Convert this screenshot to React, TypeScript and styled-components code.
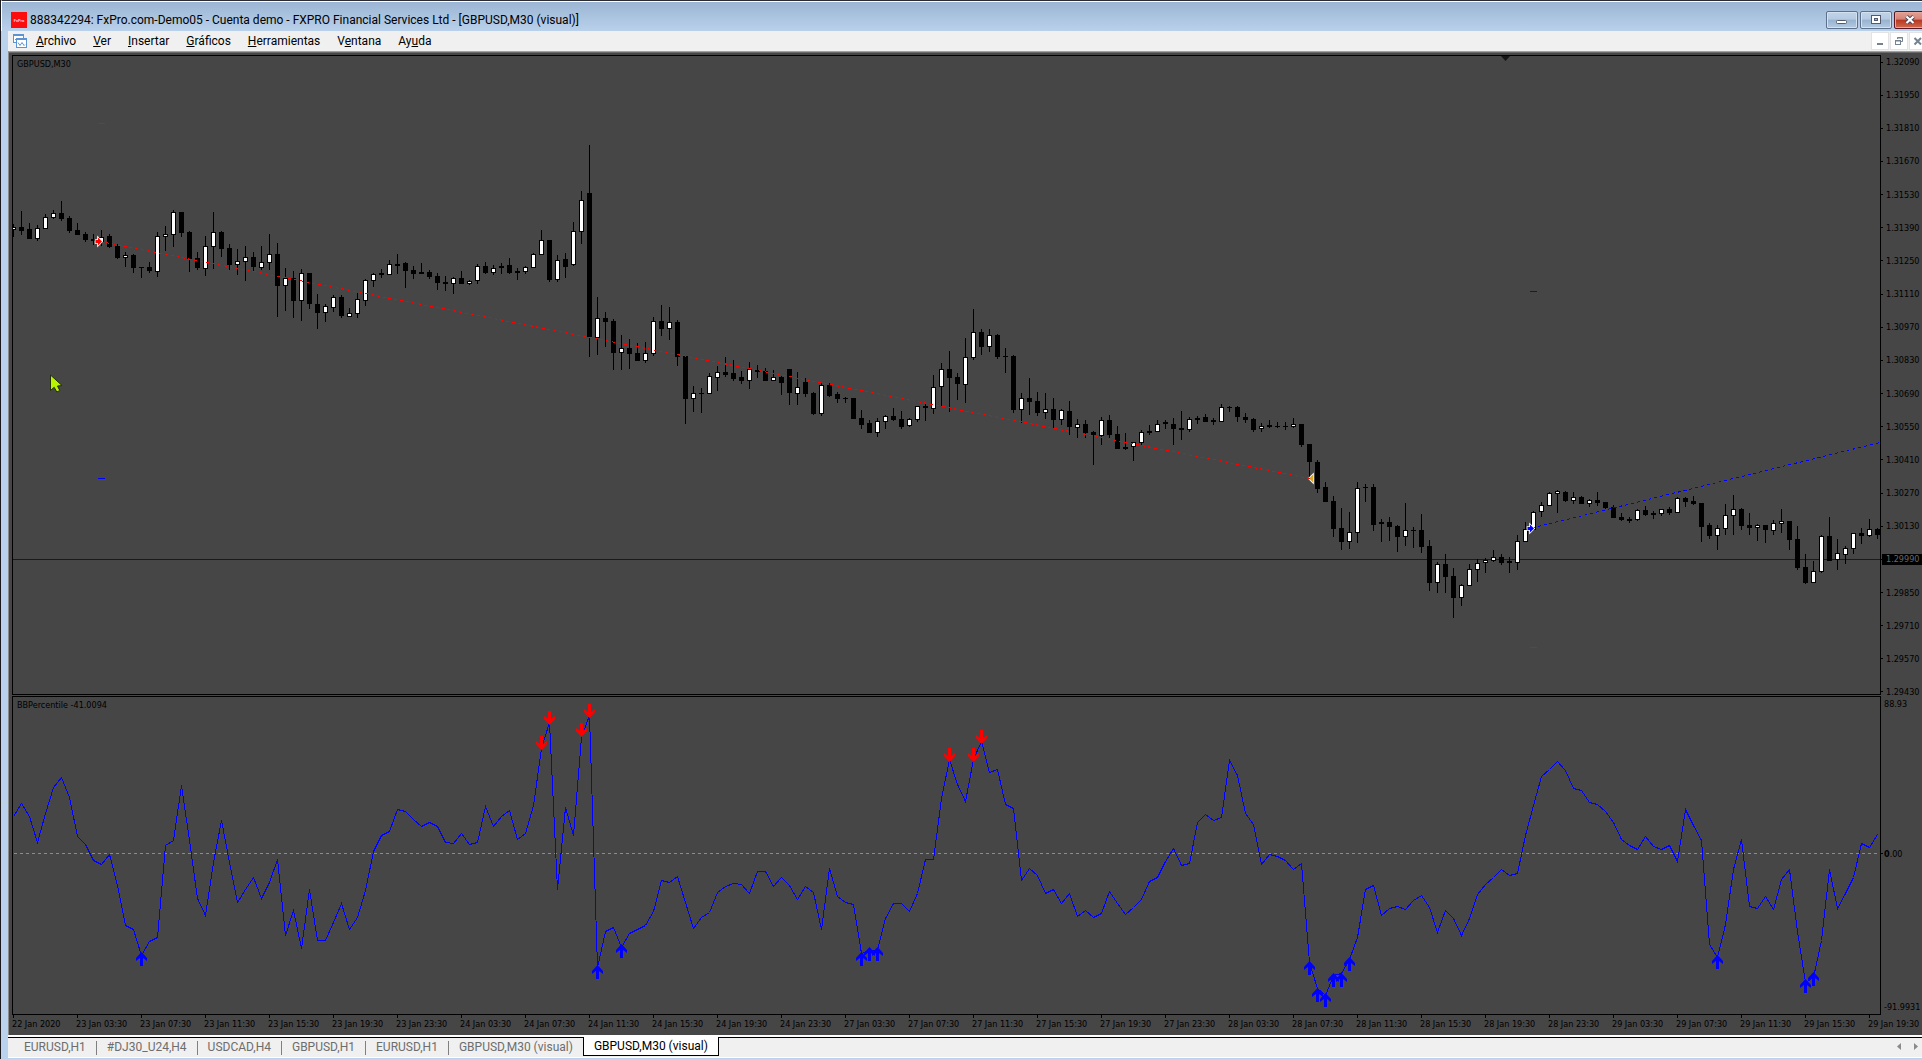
import React from "react";
import styled, { createGlobalStyle } from "styled-components";

const uiFont = `Roboto, "Open Sans", "Noto Sans", sans-serif`;
const chartFont = `"DejaVu Sans Condensed", "DejaVu Sans", "Liberation Sans", sans-serif`;

const color = {
  frame: "#bad2ec",
  bar: "#f0f0f0",
  chart: "#464646",
  ink: "#000000",
  bull: "#ffffff",
  sell: "#ff0000",
  buy: "#0000ff",
};

const GlobalStyle = createGlobalStyle`
  * { box-sizing: border-box; }
  html, body { margin: 0; padding: 0; overflow: hidden; background: ${color.frame}; }
  button { font: inherit; color: inherit; margin: 0; }
`;

const Window = styled.div`
  display: flex;
  flex-direction: column;
  height: 100vh;
  overflow: hidden;
  background: ${color.frame};
  border-left: 1px solid #1b1b1f;
  font-family: ${uiFont};
  font-size: 12px;
  color: ${color.ink};
`;

const TitleBar = styled.header`
  display: flex;
  align-items: center;
  flex: none;
  height: 31px;
  padding: 7px 0 0 9px;
  border-top: 1px solid #2b2b33;
  border-left: 1px solid #ffffff;
  box-shadow: inset 0 1px 0 #ffffff;
  background: linear-gradient(#9ab4d3, #b9d1ea);
  overflow: hidden;
`;

const Title = styled.h1`
  flex: 1;
  margin: 0 0 0 3px;
  font-size: 12px;
  line-height: 16px;
  font-weight: 400;
  white-space: nowrap;
`;

const CaptionButtons = styled.div`
  display: flex;
  gap: 2px;
  margin-right: -4px;
`;

const CaptionButton = styled.button<{ $danger?: boolean }>`
  display: flex;
  align-items: center;
  justify-content: center;
  width: 32px;
  height: 18px;
  padding: 0;
  border: 1px solid ${(p) => (p.$danger ? "#5a1622" : "#5d708c")};
  border-radius: 2px;
  box-shadow: inset 0 0 0 1px ${(p) => (p.$danger ? "#e7a79c" : "#d3e1f0")};
  background: ${(p) =>
    p.$danger
      ? "linear-gradient(#e3a095 0%, #d68375 45%, #b8371f 50%, #cf6a50 100%)"
      : "linear-gradient(#c0d3e8 0%, #b5cbe2 45%, #98b2cf 50%, #b3cae2 100%)"};
`;

const MenuBar = styled.nav`
  display: flex;
  align-items: center;
  flex: none;
  height: 20px;
  margin-left: 7px;
  padding-left: 5px;
  background: ${color.bar};
  overflow: hidden;
`;

const MenuList = styled.div`
  display: flex;
  flex: 1;
  gap: 17px;
  padding-left: 8px;
`;

const MenuItem = styled.button`
  padding: 0;
  border: 0;
  background: none;
  line-height: 18px;
`;

const ChildButtons = styled.div`
  display: flex;
  gap: 1px;
  margin-right: -5px;
`;

const ChildButton = styled.button`
  display: flex;
  align-items: center;
  justify-content: center;
  width: 18px;
  height: 18px;
  padding: 0;
  border: 1px solid #e3e3e3;
  background: #ffffff;
`;

const Workspace = styled.main`
  display: flex;
  flex-direction: column;
  flex: 1;
  min-height: 0;
  margin-left: 7px;
  padding: 3px 0 0 3px;
  border-top: 1px solid #a0a0a0;
  border-left: 1px solid #8c8c8c;
  box-shadow: inset 0 1px 0 #696969;
  background: ${color.chart};
  font-family: ${chartFont};
  font-size: 9px;
`;

const PaneRow = styled.section<{ $height?: number }>`
  display: flex;
  flex: ${(p) => (p.$height ? "none" : "1")};
  height: ${(p) => (p.$height ? `${p.$height}px` : "auto")};
  min-height: 0;
  margin-bottom: ${(p) => (p.$height ? 0 : 1)}px;
`;

const Pane = styled.div`
  position: relative;
  flex: 1;
  min-width: 0;
  border: 1px solid ${color.ink};
  overflow: hidden;
`;

const PaneLabel = styled.div`
  padding: 2px 0 0 4px;
  line-height: 12px;
`;

const Drawing = styled.svg`
  position: absolute;
  inset: 0;
  width: 100%;
  height: 100%;
`;

const Scale = styled.div`
  display: flex;
  flex-direction: column;
  justify-content: space-between;
  flex: none;
  width: 41px;
`;

const PriceScale = styled(Scale)`
  padding-top: 3px;
  margin-bottom: -1px;
`;

const ScaleMark = styled.div<{ $current?: boolean }>`
  display: flex;
  align-items: center;
  height: 8px;
  gap: ${(p) => (p.$current ? 0 : 3)}px;
  white-space: nowrap;

  &::before {
    content: "";
    flex: none;
    width: ${(p) => (p.$current ? 1 : 2)}px;
    height: 1px;
    background: ${color.ink};
  }
`;

const CurrentPrice = styled.span`
  flex: 1;
  padding-left: 4px;
  line-height: 11px;
  background: ${color.ink};
  color: #686868;
`;

const IndicatorMark = styled.div`
  padding-left: 3px;
  line-height: 16px;
`;

const ZeroMark = styled(ScaleMark)`
  gap: 1px;
  margin-bottom: 4px;
`;

const TimeScale = styled.div`
  display: flex;
  flex: none;
  height: 20px;
  overflow: hidden;
`;

const TimeMark = styled.div`
  flex: none;
  width: 64px;
  white-space: nowrap;
  line-height: 12px;

  &::before {
    content: "";
    display: block;
    width: 1px;
    height: 3px;
    margin-left: 1px;
    background: ${color.ink};
  }
`;

const TabStrip = styled.footer`
  display: flex;
  align-items: flex-start;
  flex: none;
  height: 24px;
  margin-left: 7px;
  border-top: 2px solid #ffffff;
  border-bottom: 1px solid ${color.frame};
  background: ${color.bar};
  box-shadow: inset 0 1px 0 ${color.ink}, inset 0 -1px 0 #ffffff;
`;

const Tabs = styled.div`
  display: flex;
  flex: 1;
  padding-left: 6px;
`;

const Tab = styled.button<{ $active?: boolean }>`
  height: 19px;
  padding: 0 10px;
  border: solid ${color.ink};
  border-width: ${(p) => (p.$active ? "0 1px 1px" : "0")};
  background: ${(p) => (p.$active ? "#ffffff" : "none")};
  color: ${(p) => (p.$active ? color.ink : "#6d6d6d")};
  line-height: 18px;
  white-space: nowrap;
`;

const TabDivider = styled.span`
  width: 1px;
  height: 14px;
  margin-top: 4px;
  background: #808080;
`;

const TabArrows = styled.div`
  display: flex;
  gap: 13px;
  padding: 6px 4px 0 0;
`;

const TabArrow = styled.button`
  display: flex;
  padding: 0;
  border: 0;
  background: none;
`;

/* ---------- price data ---------- */

const BAR_STEP = 8;
const PRICE_TOP = 56;

// high, body top, body bottom, low, rising (1) or falling (0)
const bars: number[][] = [
  [224,227,230,237,1],[211,227,231,235,0],[223,229,239,239,0],[225,228,239,241,1],[214,217,229,229,1],[210,213,218,219,1],
  [201,213,219,221,0],[216,218,231,233,0],[223,230,235,235,0],[232,234,240,242,0],[234,239,241,245,0],[230,237,242,246,1],
  [234,236,247,248,0],[244,246,258,259,0],[252,255,258,267,1],[254,255,268,273,0],[267,267,268,278,0],[262,267,271,273,0],
  [232,236,272,277,1],[226,234,237,251,1],[210,212,235,247,1],[212,212,233,237,0],[231,232,259,272,0],[252,258,268,270,0],
  [236,246,269,276,1],[212,232,247,269,1],[231,232,249,257,0],[244,248,265,270,0],[249,261,265,275,1],[246,257,262,281,1],
  [252,257,267,271,0],[246,262,268,270,1],[234,254,263,270,1],[243,254,286,317,0],[268,278,286,311,1],[271,278,301,318,0],
  [269,273,301,321,1],[273,273,304,309,0],[294,304,313,329,0],[304,306,313,322,1],[295,297,308,312,1],[295,297,316,318,0],
  [308,313,317,317,1],[293,299,314,318,1],[279,280,301,306,1],[273,274,281,287,1],[269,273,275,278,0],[260,264,275,275,1],
  [254,264,266,274,0],[262,263,271,288,0],[266,270,274,279,0],[263,272,274,274,0],[270,272,277,279,0],[273,276,283,290,0],
  [276,282,284,291,0],[277,278,284,294,1],[271,278,284,284,0],[280,281,284,285,1],[264,266,281,284,1],[262,266,273,274,0],
  [265,268,273,275,1],[263,266,268,274,0],[258,265,273,274,0],[268,271,273,280,0],[266,267,272,274,1],[253,254,268,268,1],
  [230,240,255,255,1],[240,240,280,282,0],[255,260,280,282,1],[253,259,267,278,0],[222,231,265,266,1],[191,200,232,244,1],
  [145,193,337,357,0],[297,318,338,355,1],[312,318,322,347,0],[319,321,353,370,0],[335,348,353,370,1],[339,348,354,369,0],
  [343,353,361,361,0],[342,353,361,363,1],[317,321,354,356,1],[305,321,329,336,0],[307,322,329,340,1],[320,322,357,366,0],
  [356,356,399,424,0],[386,393,399,412,1],[388,393,394,413,0],[373,376,394,394,1],[366,372,378,391,1],[357,372,375,377,0],
  [360,373,379,381,0],[371,377,381,384,0],[362,369,381,389,1],[365,370,372,378,0],[368,371,381,381,0],[370,377,381,381,1],
  [376,377,383,395,0],[369,369,393,405,0],[372,387,394,405,1],[378,382,394,397,0],[392,393,414,415,0],[383,385,414,416,1],
  [383,385,396,397,0],[392,394,399,403,0],[397,398,399,403,0],[398,398,419,419,0],[410,418,425,429,0],[420,423,433,433,0],
  [418,421,433,437,1],[415,416,422,429,1],[408,416,420,421,0],[411,419,427,429,0],[418,419,426,427,1],[406,406,420,422,1],
  [404,406,408,421,0],[375,387,409,414,1],[363,369,387,406,1],[351,369,378,412,0],[373,377,384,400,0],[338,357,385,403,1],
  [309,332,358,360,1],[329,332,347,355,0],[329,335,347,352,1],[334,335,357,359,0],[348,356,357,373,0],[355,356,410,413,0],
  [393,398,410,423,1],[378,398,402,415,0],[392,401,413,416,0],[393,409,413,419,1],[398,409,420,428,0],[409,410,420,425,1],
  [401,411,427,435,0],[419,424,428,438,1],[420,424,433,438,0],[431,432,435,465,0],[417,420,436,445,1],[415,420,435,438,0],
  [426,434,449,449,0],[433,447,449,450,0],[442,442,447,461,1],[430,432,443,445,1],[425,431,433,435,0],[420,424,432,432,1],
  [420,422,424,429,0],[418,424,429,445,0],[411,428,430,440,0],[417,419,430,432,1],[416,418,420,424,0],[414,417,422,422,0],
  [418,420,422,425,0],[404,407,422,422,1],[406,407,408,412,0],[406,407,417,422,0],[413,417,420,423,0],[418,419,430,432,0],
  [423,426,429,432,1],[420,425,427,428,0],[422,426,427,428,0],[422,426,427,430,0],[418,424,427,428,1],[424,424,445,447,0],
  [444,444,462,477,0],[460,462,489,493,0],[482,487,502,502,0],[496,501,529,537,0],[508,528,542,550,0],[512,532,542,549,1],
  [482,488,533,543,1],[484,487,488,502,0],[484,487,525,531,0],[519,522,524,542,0],[517,522,527,541,0],[525,526,537,552,0],
  [503,530,537,546,1],[527,530,531,548,0],[514,530,547,553,0],[540,546,583,591,0],[562,564,583,593,1],[554,564,577,593,0],
  [568,576,598,618,0],[584,585,598,606,1],[564,569,586,586,1],[559,563,570,582,1],[558,560,563,573,1],[550,557,561,562,1],
  [554,557,563,565,0],[557,561,563,573,0],[535,541,563,570,1],[522,529,542,542,1],[511,512,530,530,1],[502,505,512,517,1],
  [492,493,506,506,1],[490,491,494,513,1],[491,492,501,502,0],[492,497,501,504,1],[496,497,504,504,0],[499,500,504,507,1],
  [492,500,503,506,0],[502,502,508,509,0],[505,507,518,518,0],[513,517,520,521,0],[517,519,521,523,0],[509,510,520,521,1],
  [506,510,515,516,0],[511,513,515,519,0],[509,509,514,516,1],[507,509,513,515,0],[497,498,513,513,1],[497,498,502,507,0],
  [496,501,504,505,0],[503,503,527,542,0],[523,525,536,539,0],[525,528,536,550,1],[504,515,529,535,1],[495,509,516,535,1],
  [508,509,526,530,0],[513,525,528,535,0],[524,525,528,541,1],[525,525,530,543,0],[520,523,531,535,1],[509,521,524,533,1],
  [521,521,540,550,0],[526,539,568,570,0],[554,567,583,584,0],[561,571,583,583,1],[535,536,572,573,1],[517,536,561,561,0],
  [539,553,560,570,1],[546,548,555,564,1],[533,533,549,554,1],[528,533,536,544,0],[519,529,536,537,1],[528,529,535,539,0],
];

/* ---------- indicator data, three steps to a pixel ---------- */

const STEPS = 3;
const INDICATOR_TOP = 7;

const percentile = [
  377,340,377,455,370,292,262,322,438,462,510,522,491,585,706,716,795,753,740,465,449,286,450,625,674,515,391,515,637,597,
  560,624,575,508,734,659,775,596,751,751,695,640,717,680,600,484,436,423,358,364,388,409,395,408,457,460,428,463,455,349,
  409,379,361,447,430,345,175,95,596,351,434,140,75,830,724,711,770,730,717,706,662,569,577,557,637,715,680,666,605,587,
  580,583,609,544,544,589,560,585,628,587,605,718,533,617,636,641,790,780,780,685,638,638,663,610,506,506,325,208,283,333,
  208,152,247,238,343,354,570,533,556,609,598,640,610,679,659,680,670,604,638,673,652,626,574,562,514,473,526,520,396,371,
  391,382,211,254,370,403,522,492,499,509,538,520,815,895,915,855,850,808,740,598,586,676,653,649,658,629,614,650,727,659,
  683,736,685,613,583,562,538,556,549,436,345,257,238,214,241,294,301,337,343,362,395,446,466,478,439,469,478,466,514,356,
  404,450,762,800,703,538,446,649,655,619,658,568,536,724,875,860,750,538,655,608,560,460,471,432,
];

// bar index, top of the arrow
const buySignals = [
  [16,785],[73,826],[76,763],[106,785],[107,772],[108,772],[162,812],[163,893],[164,910],
  [165,850],[166,848],[167,802],[213,796],[224,868],[225,847],
];
const sellSignals = [[66,138],[67,64],[71,100],[72,42],[117,174],[120,174],[121,120]];

const toY = (v: number) => Math.round(v / STEPS) - INDICATOR_TOP;

const prices = Array.from({ length: 20 }, (_, i) => (1.3209 - i * 0.0014).toFixed(5));

const times = ["22 Jan 2020"];
for (const day of [23, 24, 27, 28, 29]) {
  for (const hour of ["03:30", "07:30", "11:30", "15:30", "19:30", "23:30"]) {
    times.push(`${day} Jan ${hour}`);
  }
}
times.pop();

const Candles = () => (
  <g shapeRendering="crispEdges">
    {bars.map(([high, top, bottom, low, rising], i) => {
      const x = i * BAR_STEP;
      return (
        <g key={i}>
          <rect x={x} y={high - PRICE_TOP} width={1} height={low - high} fill={color.ink} />
          <rect x={x - 2} y={top - PRICE_TOP} width={5} height={bottom - top} fill={color.ink} />
          {rising === 1 && (
            <rect x={x - 1} y={top - PRICE_TOP + 1} width={3} height={bottom - top - 2} fill={color.bull} />
          )}
        </g>
      );
    })}
  </g>
);

const EntryArrow = ({ x, y, fill }: { x: number; y: number; fill: string }) => (
  <path
    transform={`translate(${x} ${y})`}
    d="M-3.5 -1.5h2.500v-2.500l4 4l-4 4v-2.500h-2.500z"
    fill={fill}
    stroke="#ffffff"
    strokeWidth={1.600}
    paintOrder="stroke"
  />
);

const PriceDrawing = () => (
  <Drawing role="img" aria-label="GBPUSD M30">
    <path d="M0 503.500H4000" stroke="#1a1a1a" />
    <Candles />
    <g fill="none" strokeDasharray="3 3" shapeRendering="crispEdges">
      <path d="M87 185.500L1297 422.500" stroke={color.sell} />
      <path d="M1519 472L1867 386.500" stroke={color.buy} />
    </g>
    <g shapeRendering="crispEdges">
      <rect x={85} y={67} width={7} height={1} fill={color.sell} />
      <rect x={85} y={422} width={7} height={1} fill={color.buy} />
      <rect x={1517} y={235} width={7} height={1} fill={color.buy} />
      <rect x={1517} y={591} width={7} height={1} fill={color.sell} />
    </g>
    <EntryArrow x={86} y={185.5} fill={color.sell} />
    <EntryArrow x={1518} y={472.5} fill={color.buy} />
    <path d="M1300 418.500v8l-4 -4z" fill="#daa520" stroke="#ffffff" strokeWidth={1.600} paintOrder="stroke" />
    <path d="M1295 422.500h2" stroke={color.sell} />
    <path d="M1488 0h9l-4.500 5z" fill="#141414" />
    <path
      d="M37.500 319v15.500l3.700 -3.200l2.600 4.700l3 -1.500l-2.300 -4.500l4.500 -0.500z"
      fill="#b8f400"
      stroke="#24300a"
    />
  </Drawing>
);

const upArrow = "M0.500 0L6 6V9L2 6V14H-1V6L-5 9V6z";
const downArrow = "M0.500 14L6 8V5L2 8V0H-1V8L-5 5V8z";

const IndicatorDrawing = () => (
  <Drawing role="img" aria-label="BBPercentile">
    <path d="M1 156.500H1865" stroke="#8c8c8c" strokeDasharray="3 3" shapeRendering="crispEdges" />
    <polyline
      fill="none"
      stroke={color.buy}
      shapeRendering="crispEdges"
      points={percentile.map((v, i) => `${i * BAR_STEP + 0.5},${toY(v) + 0.5}`).join(" ")}
    />
    {buySignals.map(([i, v]) => (
      <path key={i} d={upArrow} fill={color.buy} transform={`translate(${i * BAR_STEP} ${toY(v)})`} />
    ))}
    {sellSignals.map(([i, v]) => (
      <path key={i} d={downArrow} fill={color.sell} transform={`translate(${i * BAR_STEP} ${toY(v)})`} />
    ))}
  </Drawing>
);

const Logo = () => (
  <svg width="16" height="16" aria-hidden="true">
    <rect width="16" height="16" fill="#fb0d0d" />
    <text x="8" y="10" textAnchor="middle" fontSize="4" fontWeight="700" fill="#ffd0d0">
      FxPro
    </text>
  </svg>
);

const ChartIcon = () => (
  <svg width="15" height="15" fill="none" stroke="#5b93d3" aria-hidden="true">
    <rect x="0.5" y="0.5" width="10" height="8" fill="#ffffff" />
    <path d="M0 1.500h11M2 6l2 -2l1 1" />
    <rect x="3.500" y="4.500" width="10" height="9" fill="#ffffff" />
    <path d="M3 5.500h11M5 8.500l2 3l2 -3l2 3l1 -1" />
  </svg>
);

const MinimizeIcon = () => (
  <svg width="12" height="10" aria-hidden="true">
    <rect x="0.5" y="5.500" width="10" height="3" rx="1" fill="#ffffff" stroke="#535a6e" />
  </svg>
);

const MaximizeIcon = () => (
  <svg width="12" height="10" fill="none" aria-hidden="true">
    <rect x="1.500" y="0.500" width="9" height="8" fill="#ffffff" stroke="#535a6e" />
    <rect x="4.500" y="3.500" width="3" height="2" fill="#9db6d2" stroke="#535a6e" />
  </svg>
);

const CloseIcon = () => (
  <svg width="12" height="10" fill="none" aria-hidden="true">
    <path d="M2.500 1.500L9.500 8M9.500 1.500L2.500 8" stroke="#4a4658" strokeWidth="4" />
    <path d="M2.500 1.500L9.500 8M9.500 1.500L2.500 8" stroke="#ffffff" strokeWidth="2.200" />
  </svg>
);

const ChildMinimizeIcon = () => (
  <svg width="10" height="10" aria-hidden="true">
    <rect x="2" y="7" width="6" height="2" fill="#75828f" />
  </svg>
);

const ChildRestoreIcon = () => (
  <svg width="10" height="10" fill="none" stroke="#75828f" aria-hidden="true">
    <path d="M3.500 3V1.500h5v4H7M3 2h6M1 5h6" />
    <rect x="1.500" y="4.500" width="5" height="4" />
  </svg>
);

const ChildCloseIcon = () => (
  <svg width="10" height="10" fill="none" stroke="#75828f" strokeWidth="2" aria-hidden="true">
    <path d="M1.500 2L8 8.500M8 2L1.500 8.500" />
  </svg>
);

// label split around its underlined access key
const menus = [
  ["", "A", "rchivo"],
  ["", "V", "er"],
  ["", "I", "nsertar"],
  ["", "G", "ráficos"],
  ["", "H", "erramientas"],
  ["V", "e", "ntana"],
  ["Ay", "u", "da"],
];

const tabs = [
  "EURUSD,H1",
  "#DJ30_U24,H4",
  "USDCAD,H4",
  "GBPUSD,H1",
  "EURUSD,H1",
  "GBPUSD,M30 (visual)",
  "GBPUSD,M30 (visual)",
];

export default function App() {
  return (
    <>
      <GlobalStyle />
      <Window>
        <TitleBar>
          <Logo />
          <Title>888342294: FxPro.com-Demo05 - Cuenta demo - FXPRO Financial Services Ltd - [GBPUSD,M30 (visual)]</Title>
          <CaptionButtons>
            <CaptionButton aria-label="Minimizar"><MinimizeIcon /></CaptionButton>
            <CaptionButton aria-label="Maximizar"><MaximizeIcon /></CaptionButton>
            <CaptionButton $danger aria-label="Cerrar"><CloseIcon /></CaptionButton>
          </CaptionButtons>
        </TitleBar>

        <MenuBar>
          <ChartIcon />
          <MenuList>
            {menus.map(([before, key, after]) => (
              <MenuItem key={before + key + after}>
                {before}
                <u>{key}</u>
                {after}
              </MenuItem>
            ))}
          </MenuList>
          <ChildButtons>
            <ChildButton aria-label="Minimizar ventana"><ChildMinimizeIcon /></ChildButton>
            <ChildButton aria-label="Restaurar ventana"><ChildRestoreIcon /></ChildButton>
            <ChildButton aria-label="Cerrar ventana"><ChildCloseIcon /></ChildButton>
          </ChildButtons>
        </MenuBar>

        <Workspace>
          <PaneRow>
            <Pane>
              <PaneLabel>GBPUSD,M30</PaneLabel>
              <PriceDrawing />
            </Pane>
            <PriceScale>
              {prices.map((price) =>
                price === "1.29990" ? (
                  <ScaleMark key={price} $current>
                    <CurrentPrice>{price}</CurrentPrice>
                  </ScaleMark>
                ) : (
                  <ScaleMark key={price}>{price}</ScaleMark>
                )
              )}
            </PriceScale>
          </PaneRow>

          <PaneRow $height={319}>
            <Pane>
              <PaneLabel>BBPercentile -41.0094</PaneLabel>
              <IndicatorDrawing />
            </Pane>
            <Scale>
              <IndicatorMark>88.93</IndicatorMark>
              <ZeroMark>
                <span>
                  <b>0</b>.00
                </span>
              </ZeroMark>
              <IndicatorMark>-91.9931</IndicatorMark>
            </Scale>
          </PaneRow>

          <TimeScale>
            {times.map((time) => (
              <TimeMark key={time}>{time}</TimeMark>
            ))}
          </TimeScale>
        </Workspace>

        <TabStrip>
          <Tabs>
            {tabs.map((tab, i) => (
              <React.Fragment key={i}>
                <Tab $active={i === tabs.length - 1}>{tab}</Tab>
                {i < tabs.length - 2 && <TabDivider />}
              </React.Fragment>
            ))}
          </Tabs>
          <TabArrows>
            <TabArrow aria-label="Pestañas anteriores">
              <svg width="4" height="7"><path d="M4 0v7l-4 -3.500z" fill="#8a8a8a" /></svg>
            </TabArrow>
            <TabArrow aria-label="Pestañas siguientes">
              <svg width="4" height="7"><path d="M0 0v7l4 -3.500z" fill="#8a8a8a" /></svg>
            </TabArrow>
          </TabArrows>
        </TabStrip>
      </Window>
    </>
  );
}
